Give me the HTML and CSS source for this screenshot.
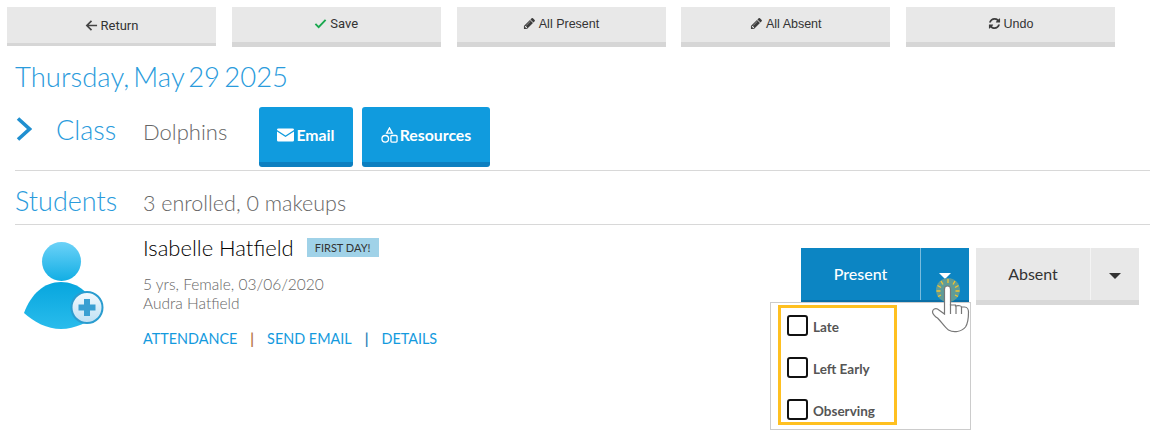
FILE: index.html
```html
<!DOCTYPE html>
<html lang="en">
<head>
<meta charset="utf-8">
<title>Attendance</title>
<link rel="stylesheet" href="styles.css">
</head>
<body>
<div class="toolbar">
  <button class="tool tool-roboto tool-thin"><svg class="ico" viewBox="0 0 14 14"><path d="M13 7H2.500M7 2 2 7l5 5" fill="none" stroke="#444" stroke-width="1.800"/></svg>Return</button>
  <button class="tool tool-roboto"><svg class="ico" viewBox="0 0 14 14"><path d="M1.500 7.500 5 11l7.500-8" fill="none" stroke="#1aa84f" stroke-width="2"/></svg>Save</button>
  <button class="tool"><svg class="ico" viewBox="0 0 1792 1792"><path fill="#3c3c3c" d="M491 1536l91-91-235-235-91 91v107h128v128h107zm523-928q0-22-22-22-10 0-17 7l-542 542q-7 7-7 17 0 22 22 22 10 0 17-7l542-542q7-7 7-17zm-54-192l416 416-832 832h-416v-416zm683 96q0 53-37 90l-166 166-416-416 166-165q36-38 90-38 53 0 91 38l235 234q37 39 37 91z"/></svg>All Present</button>
  <button class="tool"><svg class="ico" viewBox="0 0 1792 1792"><path fill="#3c3c3c" d="M491 1536l91-91-235-235-91 91v107h128v128h107zm523-928q0-22-22-22-10 0-17 7l-542 542q-7 7-7 17 0 22 22 22 10 0 17-7l542-542q7-7 7-17zm-54-192l416 416-832 832h-416v-416zm683 96q0 53-37 90l-166 166-416-416 166-165q36-38 90-38 53 0 91 38l235 234q37 39 37 91z"/></svg>All Absent</button>
  <button class="tool"><svg class="ico" viewBox="0 0 1792 1792"><path fill="#3c3c3c" d="M1639 1056q0 5-1 7-64 268-268 434.500t-478 166.500q-146 0-282.500-55t-243.500-157l-129 129q-19 19-45 19t-45-19-19-45v-448q0-26 19-45t45-19h448q26 0 45 19t19 45-19 45l-137 137q71 66 161 102t187 36q134 0 250-65t186-179q11-17 53-117 8-23 30-23h192q13 0 22.500 9.500t9.500 22.500zm25-800v448q0 26-19 45t-45 19h-448q-26 0-45-19t-19-45 19-45l138-138q-148-137-349-137-134 0-250 65t-186 179q-11 17-53 117-8 23-30 23h-199q-13 0-22.500-9.500t-9.500-22.500v-7q65-268 270-434.500t480-166.500q146 0 284 55.500t245 156.500l130-129q19-19 45-19t45 19 19 45z"/></svg>Undo</button>
</div>

<main class="content">
  <h1 class="date">Thursday, May 29 2025</h1>

  <section class="class-row">
    <svg class="chevron" viewBox="0 0 16 24"><path d="M2 1.500 13.500 12 2 22.500" fill="none" stroke="#1f8fd0" stroke-width="3.600"/></svg>
    <h2 class="title title-class">Class</h2>
    <span class="class-name">Dolphins</span>
    <button class="action action-email"><svg class="action-ico" viewBox="0 0 18 14"><path fill="#fff" d="M0 1.500A1.500 1.500 0 0 1 1.500 0h15A1.500 1.500 0 0 1 18 1.500v.3L9 7.600 0 1.800zM0 3.400l9 5.800 9-5.800v9.100a1.500 1.500 0 0 1-1.500 1.500h-15A1.500 1.500 0 0 1 0 12.500z"/></svg>Email</button>
    <button class="action action-res"><svg class="action-ico" viewBox="0 0 18 17"><g fill="none" stroke="#fff" stroke-width="1.400"><path d="M9 1 12 6.500H6z"/><circle cx="4.500" cy="12.500" r="3.500"/><rect x="10.500" y="9" width="6.500" height="7" rx="1"/></g></svg>Resources</button>
  </section>

  <section class="students-row">
    <h2 class="title title-students">Students</h2>
    <span class="students-count">3 enrolled, 0 makeups</span>
  </section>

  <section class="student">
    <svg class="avatar" viewBox="0 0 84 90">
      <defs>
        <linearGradient id="head" x1="0" y1="0" x2="0" y2="1"><stop offset="0" stop-color="#6cd2f8"/><stop offset="1" stop-color="#12aee4"/></linearGradient>
        <linearGradient id="body" x1="0" y1="0" x2="0" y2="1"><stop offset="0" stop-color="#07a6de"/><stop offset="1" stop-color="#29bcec"/></linearGradient>
        <linearGradient id="badge" x1="0" y1="0" x2="0" y2="1"><stop offset="0" stop-color="#f4fafe"/><stop offset="1" stop-color="#bfe0f4"/></linearGradient>
      </defs>
      <circle cx="37.500" cy="19.500" r="19.500" fill="url(#head)"/>
      <path fill="url(#body)" d="M0 71C7 52 20 40 37 40c17 0 31 12 38 31-10 9-24 16-38 16S10 80 0 71z"/>
      <circle cx="63" cy="65.500" r="15.500" fill="url(#badge)" stroke="#2a9ccf" stroke-width="2"/>
      <path fill="#3a9fd2" d="M60 57h6v5.500h5.500v6H66V74h-6v-5.500h-5.500v-6H60z"/>
    </svg>
    <div class="info">
      <div class="name-row">
        <span class="name">Isabelle Hatfield</span>
        <span class="badge">FIRST DAY!</span>
      </div>
      <p class="meta">5 yrs, Female, 03/06/2020<br>Audra Hatfield</p>
      <nav class="links">
        <a class="link">ATTENDANCE</a><span class="sep sep-orange">|</span><a class="link">SEND EMAIL</a><span class="sep sep-blue">|</span><a class="link">DETAILS</a>
      </nav>
    </div>
    <div class="status">
      <div class="split split-present">
        <span class="split-main">Present</span>
        <span class="split-caret"><i class="caret caret-white"></i></span>
      </div>
      <div class="split split-absent">
        <span class="split-main">Absent</span>
        <span class="split-caret"><i class="caret caret-dark"></i></span>
      </div>
      <div class="menu">
        <div class="menu-box">
          <label class="opt"><i class="check"></i><span class="opt-text">Late</span></label>
          <label class="opt"><i class="check"></i><span class="opt-text">Left Early</span></label>
          <label class="opt"><i class="check"></i><span class="opt-text">Observing</span></label>
        </div>
      </div>
      <svg class="hand" viewBox="0 0 44 64">
        <circle cx="22" cy="16" r="12" fill="#5f9c98"/>
        <g stroke="#f4c430" stroke-width="1.300"><path d="M22 5v4M15 7l2 3.500M29 7l-2 3.500M11.500 11.500l3.500 2M32.500 11.500l-3.500 2M10.500 17h4M33.500 17h-4M12 22.500l3-1.500M32 22.500l-3-1.500"/></g>
        <path fill="#fff" stroke="#777" stroke-width="1.200" d="M18.500 15c0-2 1-3 3-3s3 1 3 3v14l0 2h5v1c3-1 6 0 6 1h3c3 0 4 3 4 5 0 7-1 12-3 15-4 5-12 6-17 3-4-3-7-8-11-12-2-1-5-4-5-6 0-3 3-4 5-3l7 5z"/>
        <path fill="none" stroke="#777" stroke-width="1.200" d="M24.500 30v10M30 32v8M35.500 33v7"/>
      </svg>
    </div>
  </section>
</main>
</body>
</html>
```
FILE: styles.css
```css
* { box-sizing: border-box; }
html, body { margin: 0; padding: 0; background: #fff; }
body { width: 1150px; height: 436px; overflow: hidden; font-family: "Lato", sans-serif; color: #333; }
h1, h2, p { margin: 0; font-weight: 300; }

.toolbar { display: flex; gap: 15.750px; padding: 7px 0 0 7px; }
.tool {
  width: 209px; height: 40px; padding: 0 0 2px; border: 0; border-bottom: 5px solid #d6d6d6; background: #e8e8e8;
  font: 400 12.500px "Liberation Sans", sans-serif; color: #333; display: flex; align-items: center; justify-content: center; gap: 3px;
}
.tool-roboto { font-family: "Roboto", sans-serif; font-size: 13px; }
.tool-thin { border-bottom-width: 3px; height: 39px; padding-bottom: 0; }
.ico { width: 13px; height: 13px; flex: none; }

.content { padding: 0 0 0 15px; }
.date { font-size: 27.500px; line-height: 34px; margin-top: 13px; color: #2a9bdc; word-spacing: -3.300px; }

.class-row { display: flex; align-items: flex-start; height: 64px; margin-top: 13px; border-bottom: 1px solid #d8d8d8; position: relative; }
.chevron { width: 16px; height: 24px; margin: 10px 0 0 1px; flex: none; }
.title { font-size: 27px; color: #2a9bdc; }
.title-class { margin: 7px 0 0 24px; width: 87px; line-height: 32px; }
.class-name { font-size: 22px; font-weight: 300; color: #666; line-height: 32px; margin-top: 9px; width: 116px; }
.action {
  height: 60px; border: 0; border-bottom: 5px solid #0d7fc0; border-radius: 3px; background: #109bde; color: #fff;
  font: 700 15.800px "Lato", sans-serif; display: flex; align-items: center; justify-content: center; gap: 2px; padding: 0;
}
.action-email { width: 94px; margin-right: 9px; }
.action-res { width: 128px; }
.action-ico { width: 17px; height: 14px; flex: none; }
.action-res .action-ico { height: 16px; }

.students-row { display: flex; align-items: flex-start; height: 54px; border-bottom: 1px solid #d8d8d8; }
.title-students { width: 128px; line-height: 32px; margin-top: 14px; }
.students-count { font-size: 21.500px; font-weight: 300; color: #666; line-height: 32px; margin-top: 16px; }

.student { display: flex; height: 200px; padding-top: 12px; position: relative; }
.avatar { width: 84px; height: 90px; margin: 5px 0 0 9px; flex: none; align-self: flex-start; }
.info { width: 575px; margin-left: 35px; }
.name-row { display: flex; align-items: flex-start; gap: 13px; height: 26px; }
.name { font-size: 22px; font-weight: 300; color: #000; line-height: 22px; }
.badge { background: #a0d2e8; color: #333; font-size: 11px; padding: 0 8px; line-height: 19px; height: 19px; margin-top: 1px; }
.meta { font-size: 15.500px; line-height: 19px; color: #666; margin-top: 12px; }
.links { display: flex; font-size: 14.400px; margin-top: 17px; line-height: 18px; }
.link { color: #149ade; }
.sep { margin: 0 13px; font-weight: 700; }
.sep-orange { color: #b8794a; }
.sep-blue { color: #2f7fb8; }

.status { display: flex; gap: 7px; position: relative; margin: 11px 0 0 83px; align-self: flex-start; }
.split { display: flex; height: 57px; border-bottom: 5px solid; font-size: 16px; }
.split-present { background: #0c85c3; border-color: #0b6fa6; color: #fff; font-weight: 500; }
.split-absent { background: #e8e8e8; border-color: #d8d8d8; color: #333; }
.split-main { width: 120px; display: flex; align-items: center; justify-content: center; padding-bottom: 2px; border-right: 1px solid rgba(255,255,255,.45); }
.split-absent .split-main { width: 115px; border-right-color: #f4f4f4; }
.split-caret { width: 48px; display: flex; align-items: center; justify-content: center; padding-top: 3px; }
.caret { width: 0; height: 0; border-left: 6px solid transparent; border-right: 6px solid transparent; border-top: 6px solid; }
.caret-white { color: #fff; }
.caret-dark { color: #333; }

.menu { position: absolute; left: -31px; top: 54px; width: 201px; height: 128px; background: #fff; border: 1px solid #ccc; padding: 2px 7px; }
.menu-box { width: 119px; height: 120px; border: 3px solid #ffc020; padding: 7px 6px 0; display: flex; flex-direction: column; gap: 21px; }
.opt { display: flex; align-items: center; gap: 5px; height: 21px; font-size: 13.500px; font-weight: 700; color: #555; }
.opt-text { padding-top: 2px; }
.check { width: 21px; height: 21px; border: 2px solid #111; border-radius: 3px; flex: none; }
.hand { position: absolute; left: 125px; top: 26px; width: 44px; height: 64px; }
```
